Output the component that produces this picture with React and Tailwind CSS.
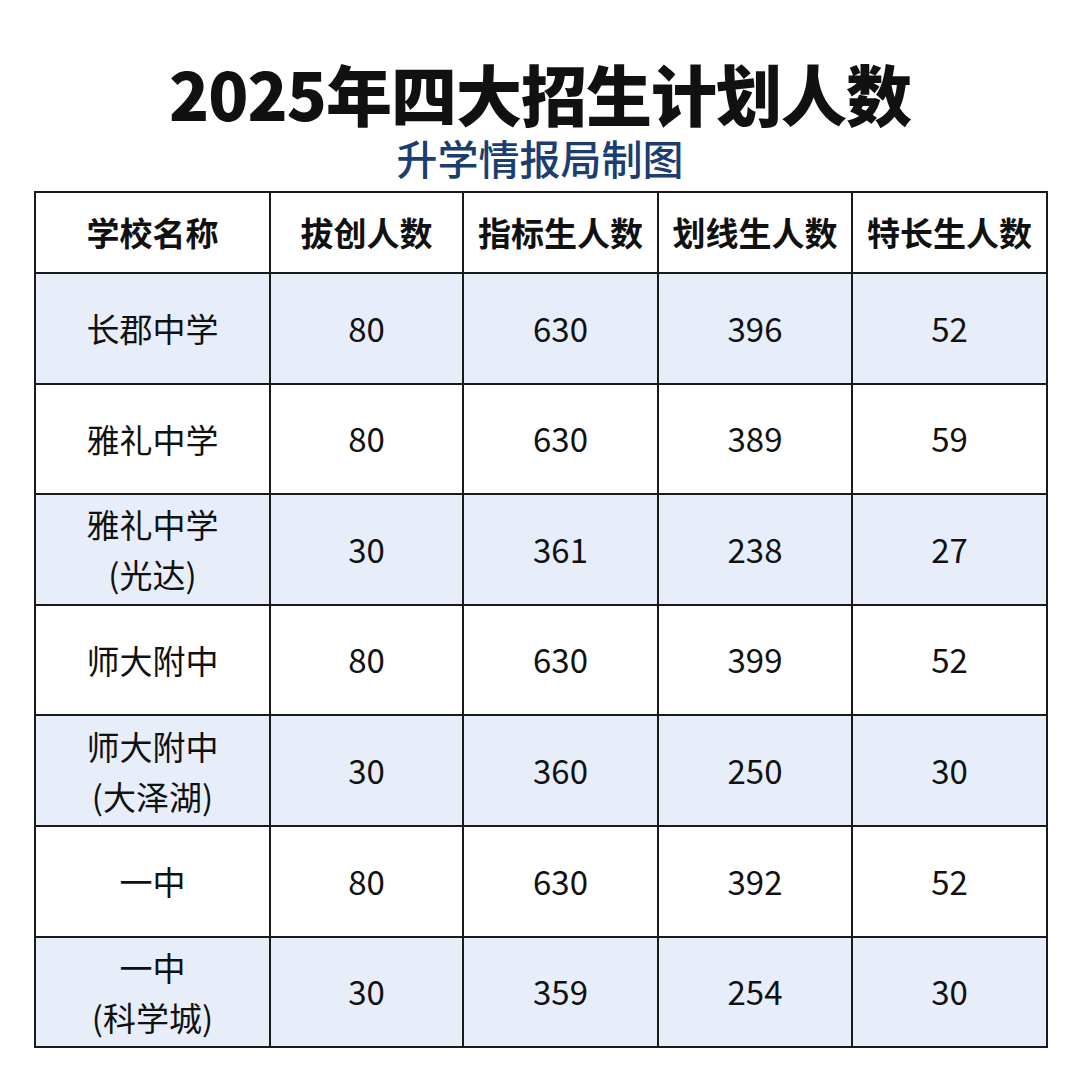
import React from "react";

const rows = [
  [["长郡中学"], "80", "630", "396", "52"],
  [["雅礼中学"], "80", "630", "389", "59"],
  [["雅礼中学", "(光达)"], "30", "361", "238", "27"],
  [["师大附中"], "80", "630", "399", "52"],
  [["师大附中", "(大泽湖)"], "30", "360", "250", "30"],
  [["一中"], "80", "630", "392", "52"],
  [["一中", "(科学城)"], "30", "359", "254", "30"],
];

const headers = ["学校名称", "拔创人数", "指标生人数", "划线生人数", "特长生人数"];

export default function App() {
  return (
    <div
      className="w-[1080px] h-[1080px] bg-white flex flex-col items-center text-[#111]"
      style={{ fontFamily: '"Noto Sans CJK SC", "Noto Sans", sans-serif' }}
    >
      <div className="mt-[58px] text-[66px] leading-[68px] font-black tracking-[-1px]">
        2025年四大招生计划人数
      </div>
      <div className="mt-[9px] text-[41px] leading-[44px] font-medium text-[#1c3d70]">
        升学情报局制图
      </div>
      <div className="mt-[12px] ml-[2px] grid grid-cols-[235px_193px_195px_194px_195px] border-l-2 border-t-2 border-[#1a1a1a]">
        {headers.map((h) => (
          <div
            key={h}
            className="h-[81px] flex items-center justify-center border-r-2 border-b-2 border-[#1a1a1a] bg-white text-[33px] font-bold"
          >
            {h}
          </div>
        ))}
        {rows.map((r, i) => {
          const bg = i % 2 === 0 ? "bg-[#e7eefa]" : "bg-white";
          return (
            <React.Fragment key={i}>
              <div
                className={`h-[110.6px] flex flex-col items-center justify-center border-r-2 border-b-2 border-[#1a1a1a] text-[33px] leading-[50px] ${bg}`}
              >
                {r[0].map((t) => (
                  <div key={t}>{t}</div>
                ))}
              </div>
              {r.slice(1).map((v, j) => (
                <div
                  key={j}
                  className={`h-[110.6px] flex items-center justify-center border-r-2 border-b-2 border-[#1a1a1a] text-[33px] ${bg}`}
                >
                  {v}
                </div>
              ))}
            </React.Fragment>
          );
        })}
      </div>
    </div>
  );
}
